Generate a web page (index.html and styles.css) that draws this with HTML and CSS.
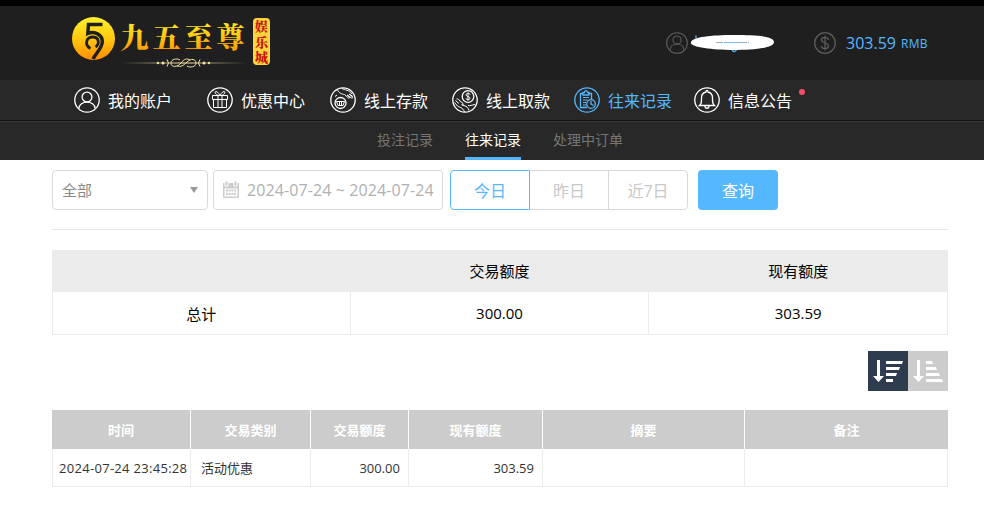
FILE: index.html
```html
<!DOCTYPE html>
<html lang="zh-CN">
<head>
    <meta charset="UTF-8">
    <title>往来记录</title>
    <link rel="stylesheet" href="styles.css">
</head>
<body>
    <header class="header">
        <div class="top">
            <svg class="logo" width="204" height="56" viewBox="0 0 204 56">
                <defs>
                    <linearGradient id="gold" x1="0" y1="0" x2="0" y2="1">
                        <stop offset="0" stop-color="#fff22c"/>
                        <stop offset="0.5" stop-color="#ffc810"/>
                        <stop offset="1" stop-color="#ff8c00"/>
                    </linearGradient>
                    <linearGradient id="line" x1="0" y1="0" x2="1" y2="0">
                        <stop offset="0" stop-color="#e8cf8a" stop-opacity="0"/>
                        <stop offset="0.5" stop-color="#fff0b8"/>
                        <stop offset="1" stop-color="#e8cf8a" stop-opacity="0"/>
                    </linearGradient>
                </defs>
                <circle cx="21.5" cy="22.5" r="21.5" fill="url(#gold)"/>
                <path d="M30.500 8.500H16.500L15.800 17.500C23 14.500 30.500 19 30.300 26C30.200 32 24 37 21 43" fill="none" stroke="#1f1f1f" stroke-width="3.500"/>
                <path d="M18.500 32.500C12.500 29.500 13.500 21 21 21C27 21 28 28 23.500 31" fill="none" stroke="#1f1f1f" stroke-width="2.800"/>
                <text class="logo-name" x="48.500 80.500 112.500 144.500" y="32" fill="url(#gold)">九五至尊</text>
                <rect x="49" y="46.500" width="126" height="1" fill="url(#line)"/>
                <path d="M96 47c0-4 6-5 9-3M96 47c0 5 7 4 10 0s6-5 9-3M121 47c0-4-5-5-9-1s-6 5-10 4M121 47c0 4-6 5-9 3M92 43.500q3 3.500 0 7M125 43.500q-3 3.500 0 7" transform="translate(3 0)" fill="none" stroke="#f6e3a1"/>
                <g fill="#f6e3a1"><circle cx="86" cy="47" r="1.200"/><circle cx="91" cy="47" r="1.500"/><circle cx="137" cy="47" r="1.200"/><circle cx="132" cy="47" r="1.500"/></g>
                <rect x="181" y="2" width="17" height="47" rx="4" fill="#fcd53a"/>
                <text class="logo-tag" x="183" y="15">娱</text>
                <text class="logo-tag" x="183" y="30.500">乐</text>
                <text class="logo-tag" x="183" y="46">城</text>
            </svg>
            <div class="user">
                <svg width="22" height="22" viewBox="0 0 26 26" class="icon">
                    <circle cx="13" cy="13" r="12.200"/><circle cx="13" cy="9.500" r="4.800"/><path d="M5 21c0-9 16-9 16 0"/>
                </svg>
                <svg class="mask" width="88" height="20" viewBox="0 0 88 20">
                    <path d="M7 2.500v3M43 17c2 3 4 1 5-1" stroke="#4aa5ea" stroke-width="1.500" fill="none"/>
                    <path d="M2 9C4 4 22 2 45 2c22 0 40 1 40 7s-20 8-41 8S-1 14 2 9z" fill="#fff"/>
                    <path d="M27 9.500h33" stroke="#9aafc2" stroke-dasharray="7 1"/>
                    <path d="M37 9.500h14" stroke="#75bdf5"/>
                </svg>
            </div>
            <div class="balance">
                <svg width="22" height="22" viewBox="0 0 22 22" class="icon">
                    <circle cx="11" cy="11" r="10.300"/><path d="M14.500 8c0-3.500-7-3.500-7 0s7 2.500 7 6-7 3.500-7 0M11 3.500v15"/>
                </svg>
                <span class="amount">303.59</span><span class="unit">RMB</span>
            </div>
        </div>
        <nav class="nav">
            <a class="nav-item account">
                <svg width="26" height="26" viewBox="0 0 26 26" class="icon">
                    <circle cx="13" cy="13" r="12.200"/><circle cx="13" cy="10" r="4.900"/><path d="M5 21.500c0-8.500 16-8.500 16 0"/>
                </svg>
                <span>我的账户</span>
            </a>
            <a class="nav-item promo">
                <svg width="26" height="26" viewBox="0 0 26 26" class="icon">
                    <circle cx="13" cy="13" r="12.200"/><path class="thin" d="M5.500 8.500h15v4h-15zM6.500 12.500v8h13v-8M11 8.500v12M15 8.500v12M13 8.500C8 8.500 7 4.500 9 4.500s4 4 4 4 2-4 4-4 1 4-4 4"/>
                </svg>
                <span>优惠中心</span>
            </a>
            <a class="nav-item">
                <svg width="26" height="26" viewBox="0 0 26 26" class="icon">
                    <circle cx="13" cy="13" r="12.200"/><circle cx="10.500" cy="16" r="5.500"/><path class="thin" d="M6.500 14.500h8l-1.500 4H8zM9.500 14.500v4M11.500 14.500v4M5 9.500l2-1.500M7.500 3c2 3.500 4 4 7 4.500l4 3.500c1 .5 1.500-.5 1-1l-2.500-2 4.500 3c1 .5 1.500-.5 1-1l-3.500-3 4 2.500M12 1.500c3 2 7 1 10 5.500"/>
                </svg>
                <span>线上存款</span>
            </a>
            <a class="nav-item">
                <svg width="26" height="26" viewBox="0 0 26 26" class="icon">
                    <circle cx="13" cy="13" r="12.200"/><circle cx="16" cy="9.500" r="5.800"/><path class="thin" d="M18 7.800c0-2-4-2-4 0s4 1.500 4 3.500-4 2-4 0M16 5.500v8M2.500 15.500l3 3.500c2 1.500 5 1 7 6M3.500 13.500l3.500 3M4.500 12c1-.5 1.500 0 2.500 1l4 3.500c1 1-.5 2-1.500 1M10 18l2 .5c3 1 4 2 5 5M16 18.500c2 .5 4-.5 7-1"/>
                </svg>
                <span>线上取款</span>
            </a>
            <a class="nav-item active">
                <svg width="26" height="26" viewBox="0 0 26 26" class="icon">
                    <circle cx="13" cy="13" r="12.200"/><path d="M13 20.500H6.500v-14H9M15 6.500h2.500V12M9 8V5.500h1.500c0-2.500 3-2.500 3 0H15V8z"/><path class="thin" d="M9 10.500h6M9 13h4.500M9 15.500h3M9 18h3"/><circle cx="17" cy="17" r="4.300"/><path d="M17 14v3l2.500 1.500"/>
                </svg>
                <span>往来记录</span>
            </a>
            <a class="nav-item notice">
                <svg width="26" height="26" viewBox="0 0 26 26" class="icon">
                    <circle cx="13" cy="13" r="12.200"/><path d="M5.500 18.500h15c-2.500-2-2-4-2-7.500 0-3.500-2-5.500-4.500-6 0-2-2-2-2 0-2.500.5-4.500 2.500-4.500 6 0 3.500.5 5.500-2 7.500zM11 19c0 3 4 3 4 0"/>
                </svg>
                <span>信息公告</span>
                <i class="dot"></i>
            </a>
        </nav>
        <nav class="subnav">
            <a>投注记录</a>
            <a class="current">往来记录</a>
            <a>处理中订单</a>
        </nav>
    </header>

    <main class="container">
        <div class="filter">
            <div class="select"><span>全部</span><i class="arrow"></i></div>
            <div class="date">
                <svg width="18" height="18" viewBox="0 0 18 18">
                    <path d="M1 2h16v14q0 1-1 1H2q-1 0-1-1z" fill="#ccc"/>
                    <path d="M2.500 7.500h13v8h-13z" fill="#fff"/>
                    <path d="M3 0h3v5H3zM12 0h3v5h-3z" fill="#ccc" stroke="#fff"/>
                    <path d="M4 9.500h10M4 13h10" stroke="#ccc" stroke-width="2" stroke-dasharray="2 .7"/>
                </svg>
                <span>2024-07-24 ~ 2024-07-24</span>
            </div>
            <div class="range">
                <button class="on">今日</button><button>昨日</button><button>近7日</button>
            </div>
            <button class="search">查询</button>
        </div>

        <table class="total">
            <tr><th></th><th>交易额度</th><th>现有额度</th></tr>
            <tr><td>总计</td><td>300.00</td><td>303.59</td></tr>
        </table>

        <div class="sort">
            <svg width="40" height="40" viewBox="0 0 40 40" class="desc">
                <path d="M9 9h3v16h4l-5.500 6L5 25h4zM18 10h17l-1 3H18zM18 16h14l-1 3H18zM18 22h11l-1 3H18zM18 28h7v3h-7z"/>
            </svg>
            <svg width="40" height="40" viewBox="0 0 40 40" class="asc">
                <path d="M9 9h3v16h4l-5.500 6L5 25h4zM18 10h6l1 3h-7zM18 16h10l1 3H18zM18 22h13l1 3H18zM18 28h16l1 3H18z"/>
            </svg>
        </div>

        <table class="list">
            <colgroup>
                <col class="c-time"><col class="c-type"><col class="c-amount"><col class="c-balance"><col class="c-summary"><col>
            </colgroup>
            <tr><th>时间</th><th>交易类别</th><th>交易额度</th><th>现有额度</th><th>摘要</th><th>备注</th></tr>
            <tr><td class="time">2024-07-24 23:45:28</td><td>活动优惠</td><td class="num">300.00</td><td class="num">303.59</td><td></td><td></td></tr>
        </table>
    </main>
</body>
</html>
```

FILE: styles.css
```css
* {
    box-sizing: border-box;
}

body {
    margin: 0;
    background: #fff;
    font-family: "Open Sans", "Noto Sans CJK SC", sans-serif;
    font-size: 14px;
    overflow: hidden;
}

.header {
    border-top: 6px solid #000;
    background: #282828;
}

.top {
    height: 74px;
    padding-left: 72px;
    background: #1f1f1f;
    display: flex;
    align-items: flex-start;
}

.logo {
    margin-top: 10px;
}

.logo-name {
    font-family: "Noto Serif CJK SC", "Noto Sans CJK SC", serif;
    font-size: 28px;
    font-weight: 900;
}

.logo-tag {
    font-family: "Noto Serif CJK SC", "Noto Sans CJK SC", serif;
    font-size: 13px;
    font-weight: 900;
    fill: #c8140a;
}

.icon {
    flex: none;
    fill: none;
    stroke: currentColor;
    stroke-width: 1.3;
}

.thin {
    stroke-width: 1;
}

.user, .balance {
    display: flex;
    align-items: center;
    height: 74px;
    color: #5c5c5c;
}

.user {
    margin-left: 390px;
}

.mask {
    margin-left: 1px;
}

.balance {
    margin-left: 37px;
    line-height: 24px;
}

.amount {
    margin-left: 10px;
    font-size: 16px;
    color: #55b8ff;
}

.unit {
    margin: 2px 0 0 5px;
    font-size: 12px;
    letter-spacing: 0.3px;
    color: #55b8ff;
}

.nav {
    height: 41px;
    padding-left: 74px;
    border-bottom: 1px solid #111;
    display: flex;
    gap: 24px;
}

.nav-item {
    display: flex;
    align-items: center;
    gap: 8px;
    color: #fff;
    font-size: 16px;
    white-space: nowrap;
    position: relative;
}

.nav-item span {
    margin-bottom: 1px;
}

.account {
    margin-right: 11px;
}

.promo {
    margin-right: 1px;
}

.notice {
    margin-left: -2px;
}

.nav .active {
    color: #55b8ff;
}

.dot {
    position: absolute;
    top: 9px;
    right: -13px;
    width: 6px;
    height: 6px;
    border-radius: 50%;
    background: #ff4d6d;
}

.subnav {
    height: 39px;
    padding-left: 377px;
    border-top: 1px solid #383838;
    display: flex;
    gap: 32px;
}

.subnav a {
    line-height: 35px;
    color: #757575;
}

.subnav .current {
    color: #fff;
    border-bottom: 3px solid #55b8ff;
}

.container {
    width: 896px;
    margin: 0 auto 0 52px;
}

.filter {
    height: 70px;
    padding-top: 10px;
    border-bottom: 1px solid #e6e6e6;
    display: flex;
    color: #888;
    font-size: 15px;
}

.select, .date {
    height: 40px;
    border: 1px solid #d9d9d9;
    border-radius: 4px;
    display: flex;
    align-items: center;
}

.select {
    width: 156px;
    margin-right: 5px;
    padding: 0 9px;
    justify-content: space-between;
}

.select span {
    margin-bottom: 2px;
}

.arrow {
    border: 4px solid transparent;
    border-top: 6px solid #999;
    border-bottom: 0;
}

.date {
    width: 230px;
    margin-right: 7px;
    padding-left: 8px;
    gap: 7px;
    color: #b0b0b0;
    font-size: 16px;
    letter-spacing: 0.1px;
    white-space: nowrap;
}

.range {
    display: flex;
}

button {
    height: 40px;
    padding: 0 0 1px;
    font-family: inherit;
    font-size: 16px;
}

.range button {
    width: 80px;
    margin-right: -1px;
    border: 1px solid #d9d9d9;
    background: #fff;
    color: #c8c8c8;
}

.range button:last-child {
    border-radius: 0 4px 4px 0;
}

.range .on {
    position: relative;
    border-color: #55b8ff;
    border-radius: 4px 0 0 4px;
    color: #55b8ff;
}

.search {
    width: 80px;
    margin-left: 11px;
    border: 0;
    border-radius: 4px;
    background: #55b8ff;
    color: #fff;
}

table {
    width: 896px;
    border-collapse: separate;
    border-spacing: 0;
    table-layout: fixed;
}

.total {
    margin-top: 20px;
    font-size: 15px;
    text-align: center;
    color: #000;
}

.total th {
    height: 42px;
    padding: 0 1px 2px 0;
    background: #ebebeb;
    font-weight: normal;
}

.total td {
    height: 43px;
    padding: 0;
    border: solid #ebebeb;
    border-width: 0 1px 1px 0;
}

.total td:first-child, .list td:first-child {
    border-left-width: 1px;
}

.sort {
    margin-top: 16px;
    display: flex;
    justify-content: flex-end;
}

.sort svg {
    fill: #fff;
}

.desc {
    background: #2e3c50;
}

.asc {
    background: #ccc;
}

.list {
    margin-top: 19px;
    font-size: 13px;
    color: #333;
}

.list th {
    height: 39px;
    padding: 0 0 1px;
    background: #ccc;
    border-right: 1px solid #fff;
    color: #fff;
    font-weight: bold;
}

.list th:last-child {
    border-right: 0;
}

.list td {
    height: 38px;
    padding: 0 8px 0 10px;
    border: solid #ebebeb;
    border-width: 0 1px 1px 0;
}

.list .time {
    padding: 0 0 0 6px;
    letter-spacing: 0.3px;
    white-space: nowrap;
}

.list .num {
    text-align: right;
}

.c-time {
    width: 139px;
}

.c-type {
    width: 120px;
}

.c-amount {
    width: 98px;
}

.c-balance {
    width: 134px;
}

.c-summary {
    width: 202px;
}
```
